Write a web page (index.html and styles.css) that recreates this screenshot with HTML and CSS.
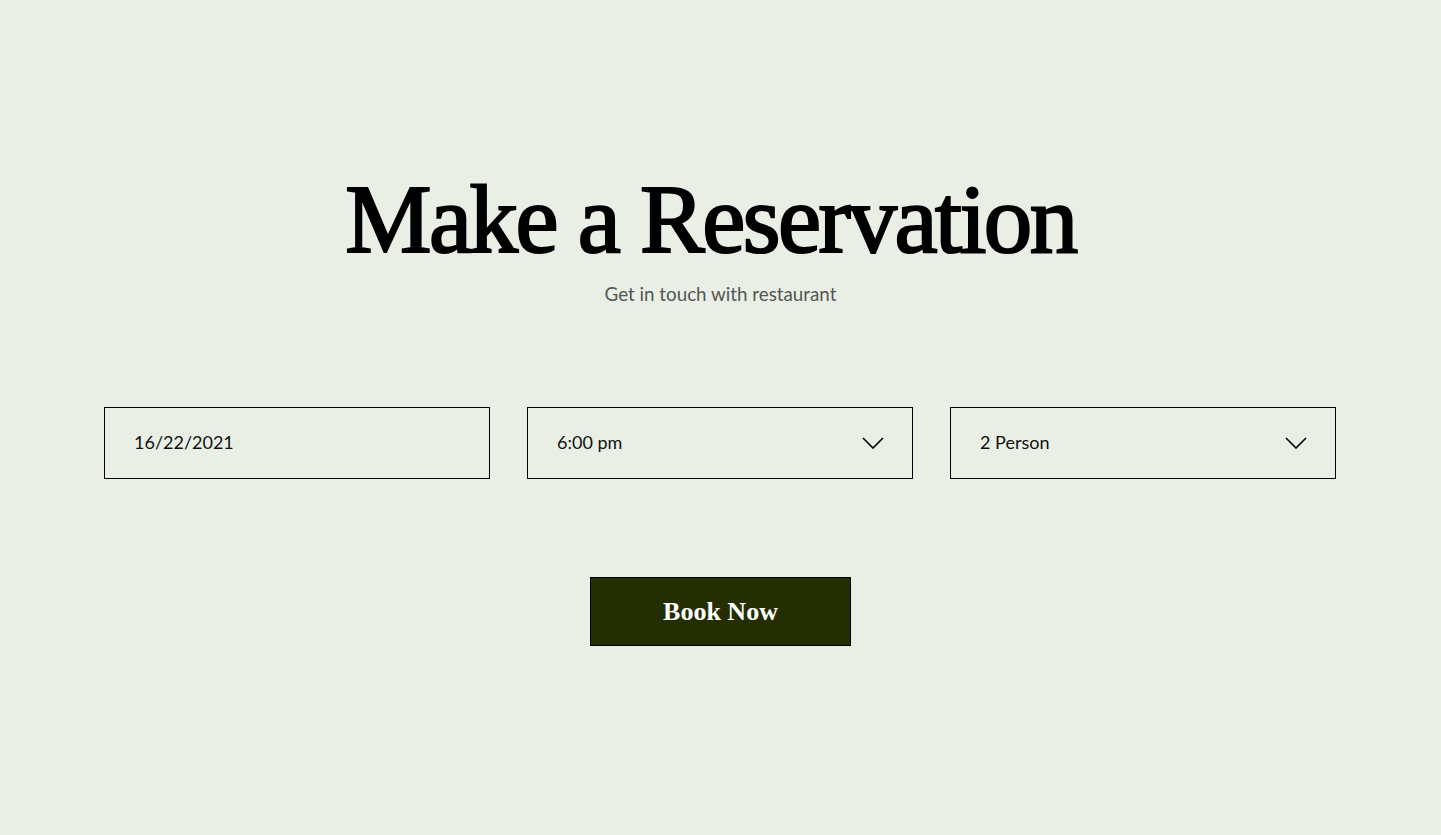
FILE: index.html
```html
<!DOCTYPE html>
<html lang="en">
<head>
<meta charset="utf-8">
<title>Make a Reservation</title>
<link rel="stylesheet" href="styles.css">
</head>
<body>
<main class="reservation">
  <h1 class="title">Make a Reservation</h1>
  <p class="subtitle">Get in touch with restaurant</p>
  <form class="fields">
    <div class="field"><span class="value">16/22/2021</span></div>
    <div class="field"><span class="value">6:00 pm</span>
      <svg class="chev" width="22" height="12" viewBox="0 0 22 12"><path d="M1 1 L11 11 L21 1" fill="none" stroke="#000" stroke-width="1.6"/></svg>
    </div>
    <div class="field"><span class="value">2 Person</span>
      <svg class="chev" width="22" height="12" viewBox="0 0 22 12"><path d="M1 1 L11 11 L21 1" fill="none" stroke="#000" stroke-width="1.6"/></svg>
    </div>
  </form>
  <button class="book" type="button">Book Now</button>
</main>
</body>
</html>
```
FILE: styles.css
```css
html, body {
  margin: 0;
  padding: 0;
  background: #e9efe5;
}
body {
  font-family: Lato, "Liberation Sans", sans-serif;
  color: #000;
}
.reservation {
  display: flex;
  flex-direction: column;
  align-items: center;
  padding-top: 165px;
}
.title {
  margin: 0 20px 0 0;
  font-family: "Liberation Serif", serif;
  font-weight: 400;
  font-size: 97px;
  line-height: 110px;
  letter-spacing: -2.5px;
  -webkit-text-stroke: 2.2px #000;
}
.subtitle {
  margin: 7px 0 0;
  font-size: 18.8px;
  line-height: 24px;
  color: #555;
}
.fields {
  margin-top: 101px;
  margin-right: 1px;
  display: grid;
  grid-template-columns: repeat(3, 386px);
  gap: 37px;
}
.field {
  box-sizing: border-box;
  height: 72px;
  border: 1.5px solid #000;
  display: flex;
  align-items: center;
  justify-content: space-between;
  padding: 0 28px 0 29px;
}
.value {
  font-size: 18px;
  color: #111;
  position: relative;
  top: -1px;
}
.book {
  margin-top: 98px;
  width: 261px;
  height: 69px;
  background: #242e00;
  border: 1px solid #000;
  color: #fff;
  font-family: "Liberation Serif", serif;
  font-weight: 700;
  font-size: 26px;
  cursor: pointer;
}
```
